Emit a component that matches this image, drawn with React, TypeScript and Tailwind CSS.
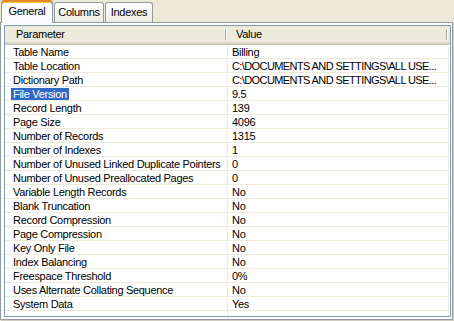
import React from "react";

const rows: [string, string][] = [
  ["Table Name", "Billing"],
  ["Table Location", "C:\\DOCUMENTS AND SETTINGS\\ALL USE..."],
  ["Dictionary Path", "C:\\DOCUMENTS AND SETTINGS\\ALL USE..."],
  ["File Version", "9.5"],
  ["Record Length", "139"],
  ["Page Size", "4096"],
  ["Number of Records", "1315"],
  ["Number of Indexes", "1"],
  ["Number of Unused Linked Duplicate Pointers", "0"],
  ["Number of Unused Preallocated Pages", "0"],
  ["Variable Length Records", "No"],
  ["Blank Truncation", "No"],
  ["Record Compression", "No"],
  ["Page Compression", "No"],
  ["Key Only File", "No"],
  ["Index Balancing", "No"],
  ["Freespace Threshold", "0%"],
  ["Uses Alternate Collating Sequence", "No"],
  ["System Data", "Yes"],
];

const Tab = ({ label, active, width }: { label: string; active?: boolean; width: string }) => {
  if (active) {
    return (
      <div
        className={`relative z-10 ${width} h-[23px] -mb-px flex items-center justify-center rounded-t-[3px] border-x border-[#919B9C] bg-[#FCFCFE] shadow-[inset_0_2px_0_#E68B2C,inset_0_3px_0_#FFC73C] pb-[1px]`}
      >
        {label}
      </div>
    );
  }
  return (
    <div
      className={`${width} h-[20px] flex items-center justify-center rounded-t-[3px] border border-b-0 border-[#919B9C] bg-gradient-to-b from-white to-[#ECEBE6]`}
    >
      {label}
    </div>
  );
};

export default function App() {
  return (
    <div className="w-[454px] h-[321px] overflow-hidden bg-[#ECE9D8] font-['Liberation_Sans',Arial,sans-serif] text-[11px] text-black tracking-[-0.3px]">
      <div className="flex items-end h-[22px] pl-[1px] gap-[1px]">
        <Tab label="General" active width="w-[52px]" />
        <Tab label="Columns" width="w-[50px]" />
        <Tab label="Indexes" width="w-[48px]" />
      </div>
      <div className="w-[453px] h-[298px] border border-[#919B9C] bg-[#FCFCFE] pl-[3px] pr-[1px] pt-[2px] pb-[2px] shadow-[1px_1px_0_#D0CEBF]">
        <div className="w-[447px] h-[292px] border border-[#7F9DB9] bg-white flex flex-col">
          <div className="flex h-[19px] bg-[#EBEADB] shadow-[inset_0_-1px_0_#CBC7B8,inset_0_-2px_0_#D6D2C2,inset_0_-3px_0_#E2DECD]">
            <div className="relative w-[223px] pl-[11px] flex items-center pb-[2px]">
              Parameter
              <div className="absolute right-[1px] top-[4px] bottom-[5px] w-[2px] border-l border-[#ACA899] border-r border-r-white" />
            </div>
            <div className="relative w-[221px] pl-[8px] flex items-center pb-[2px]">
              Value
              <div className="absolute right-[1px] top-[4px] bottom-[5px] w-[2px] border-l border-[#ACA899] border-r border-r-white" />
            </div>
          </div>
          {rows.map(([name, value], i) => {
            const selected = name === "File Version";
            const longValue = value.length > 20;
            return (
              <div key={i} className="flex h-[14px] leading-[13px] pt-[1px]">
                <div className="w-[223px] border-r border-b border-[#EDEADB] pl-[6px] whitespace-nowrap overflow-hidden">
                  <span className={selected ? "inline-block h-[13px] -mt-[1px] pt-[1px] px-[2px] bg-[#316AC5] text-white" : "inline-block px-[2px]"}>
                    {name}
                  </span>
                </div>
                <div
                  className={`w-[221px] border-r border-b border-[#EDEADB] pl-[4px] whitespace-nowrap overflow-hidden ${longValue ? "tracking-[-0.6px]" : ""}`}
                >
                  {value}
                </div>
              </div>
            );
          })}
          <div className="flex flex-1">
            <div className="w-[223px] border-r border-[#EDEADB]" />
            <div className="w-[221px] border-r border-[#EDEADB]" />
          </div>
        </div>
      </div>
    </div>
  );
}
